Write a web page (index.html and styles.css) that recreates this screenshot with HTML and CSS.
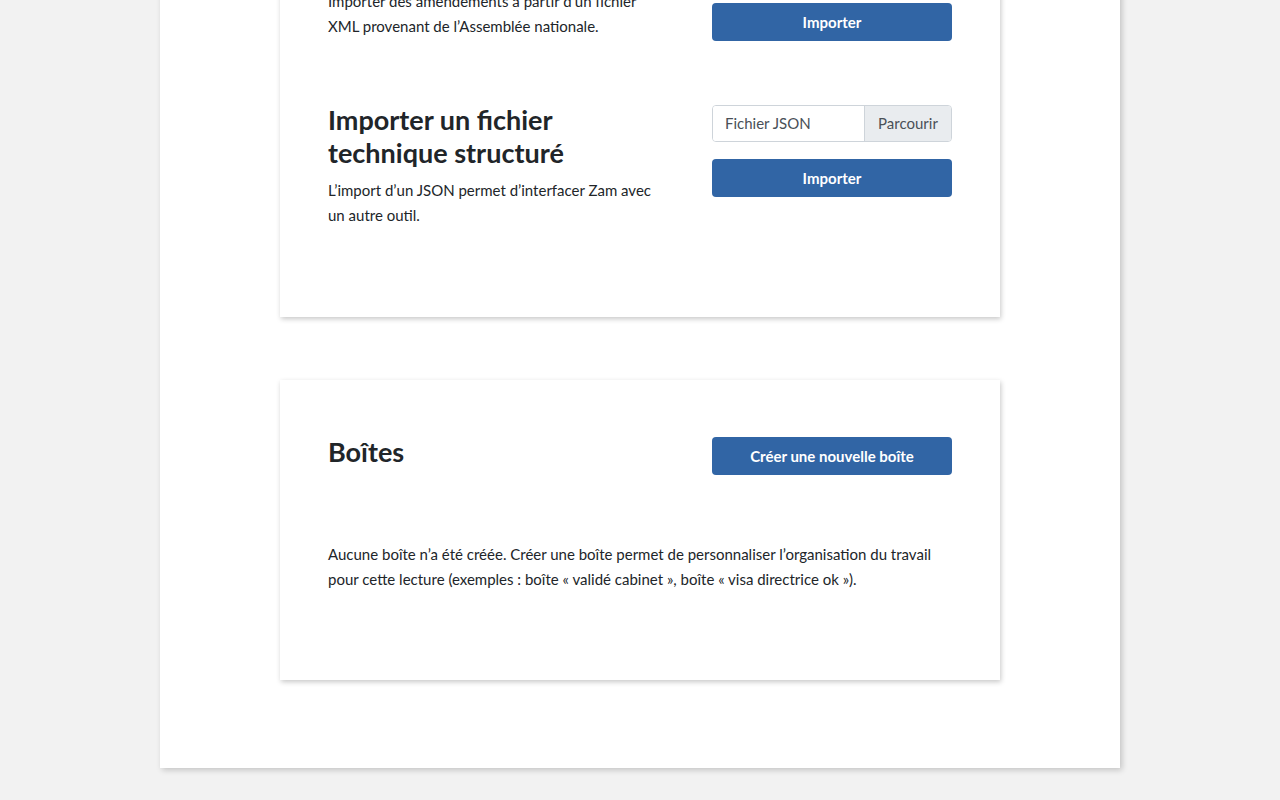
FILE: index.html
```html
<!DOCTYPE html>
<html lang="fr">
<head>
<meta charset="utf-8">
<title>Zam – Lecture</title>
<link rel="stylesheet" href="styles.css">
</head>
<body>
<div class="scroller">
  <main class="page">
    <section class="card">
      <div class="row">
        <div class="col-text">
          <h2>Importer un fichier XML</h2>
          <p>Importer des amendements à partir d’un fichier XML provenant de l’Assemblée nationale.</p>
        </div>
        <form class="col-actions">
          <div class="file-input">
            <span class="file-label">Fichier XML</span>
            <span class="file-browse">Parcourir</span>
          </div>
          <button type="button" class="btn">Importer</button>
        </form>
      </div>
      <div class="row">
        <div class="col-text">
          <h2>Importer un fichier technique structuré</h2>
          <p>L’import d’un JSON permet d’interfacer Zam avec un autre outil.</p>
        </div>
        <form class="col-actions">
          <div class="file-input">
            <span class="file-label">Fichier JSON</span>
            <span class="file-browse">Parcourir</span>
          </div>
          <button type="button" class="btn">Importer</button>
        </form>
      </div>
    </section>

    <section class="card">
      <div class="row row-head">
        <div class="col-text">
          <h2>Boîtes</h2>
        </div>
        <div class="col-actions">
          <button type="button" class="btn">Créer une nouvelle boîte</button>
        </div>
      </div>
      <p class="note">Aucune boîte n’a été créée. Créer une boîte permet de personnaliser l’organisation du travail pour cette lecture (exemples&nbsp;: boîte «&nbsp;validé cabinet&nbsp;», boîte «&nbsp;visa directrice ok&nbsp;»).</p>
    </section>
  </main>
</div>
</body>
</html>
```

FILE: styles.css
```css
* { box-sizing: border-box; }
html, body {
  margin: 0;
  padding: 0;
  background: #f2f2f2;
  font-family: "Source Sans Pro", Lato, "Liberation Sans", sans-serif;
  color: #212529;
  font-size: 15px;
  line-height: 25px;
}
.scroller {
  margin-top: -171px;
  padding-bottom: 32px;
}
.page {
  width: 960px;
  margin: 0 auto;
  background: #fff;
  box-shadow: 2px 2px 6px rgba(0, 0, 0, 0.2);
  padding: 64px 120px 88px;
  display: flex;
  flex-direction: column;
  gap: 63px;
}
.card {
  background: #fff;
  box-shadow: 1px 2px 5px rgba(0, 0, 0, 0.22);
  padding: 56px 48px 48px;
  display: flex;
  flex-direction: column;
}
.row {
  display: flex;
  gap: 48px;
  margin-bottom: 64px;
}
.row:last-child { margin-bottom: 41px; }
.col-text {
  width: 336px;
}
.col-actions {
  width: 240px;
  margin: 0;
  display: flex;
  flex-direction: column;
  gap: 17px;
}
h2 {
  margin: -2px 0 9px;
  font-size: 27px;
  line-height: 33px;
  font-weight: 700;
  color: #212529;
}
p { margin: 0; }
.file-input {
  display: flex;
  height: 37px;
  border: 1px solid #ced4da;
  border-radius: 4px;
  overflow: hidden;
  color: #495057;
  font-size: 15px;
}
.file-label {
  flex: 1;
  padding: 0 12px;
  display: flex;
  align-items: center;
  background: #fff;
}
.file-browse {
  width: 87px;
  display: flex;
  align-items: center;
  justify-content: center;
  background: #e9ecef;
  border-left: 1px solid #ced4da;
}
.btn {
  height: 38px;
  border: 0;
  border-radius: 4px;
  background: #3165a5;
  color: #fff;
  font-family: inherit;
  font-size: 15px;
  font-weight: 700;
  cursor: pointer;
}
.row-head {
  margin-bottom: 65px;
}
.row-head h2 { margin-top: -1px; }
.row-head .col-actions { padding-top: 1px; }
.note {
  margin-bottom: 40px;
}
```
